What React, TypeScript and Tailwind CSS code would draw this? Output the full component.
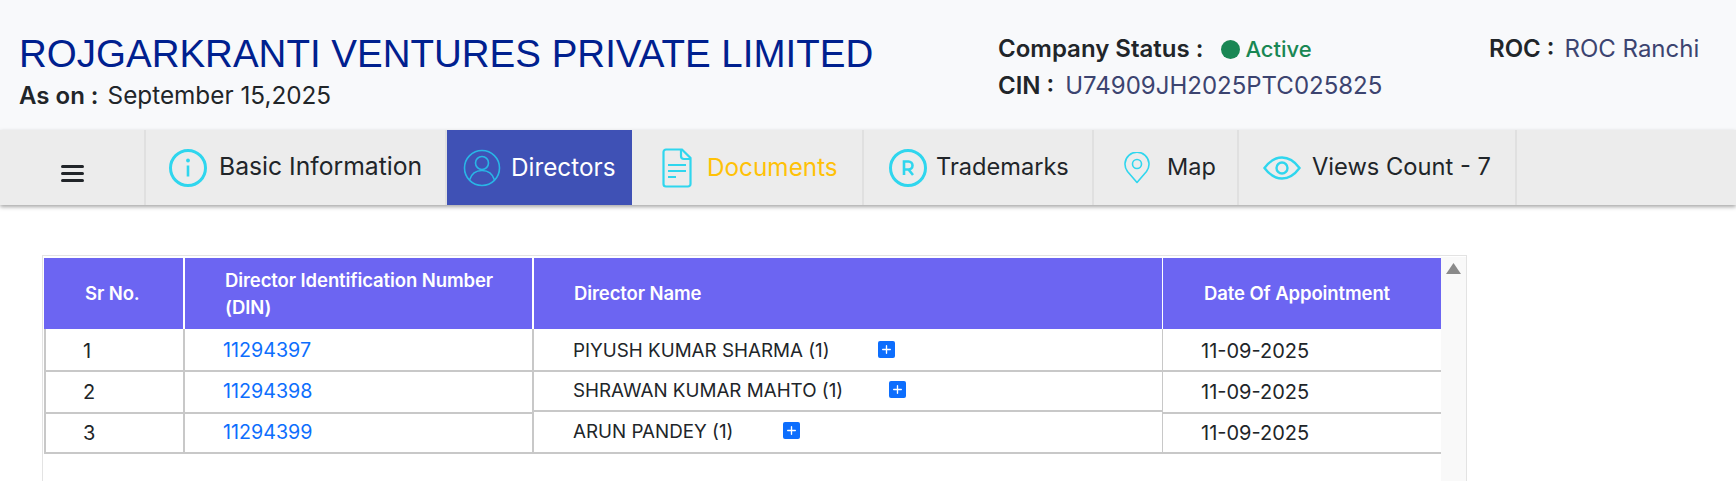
import React from 'react';
import { Plus } from 'lucide-react';

const cyan = '#2fd6ee';

const InfoIcon = () => (
  <svg width="38" height="38" viewBox="0 0 38 38" fill="none" stroke={cyan}>
    <circle cx="19" cy="19" r="17.5" strokeWidth="3" />
    <circle cx="19" cy="11.5" r="1.9" fill={cyan} stroke="none" />
    <path d="M19 16.5V27.5" strokeWidth="2.6" />
  </svg>
);

const UserIcon = () => (
  <svg width="38" height="38" viewBox="0 0 38 38" fill="none" stroke="#29b6e6" strokeWidth="1.6">
    <circle cx="19" cy="19" r="17.5" />
    <circle cx="19" cy="14" r="6.5" />
    <path d="M6.5 31c2-6.5 7-9.5 12.500-9.500s10.500 3 12.500 9.500" />
  </svg>
);

const DocIcon = () => (
  <svg width="30" height="40" viewBox="0 0 30 40" fill="none" stroke={cyan} strokeWidth="2.200">
    <path d="M20 1.500H4a2.500 2.500 0 0 0-2.500 2.500v32A2.500 2.500 0 0 0 4 38.500h22a2.500 2.500 0 0 0 2.500-2.500V10z" />
    <path d="M19 2v6a3 3 0 0 0 3 3h6.500" />
    <path d="M6 17h18M6 23h18M6 29h8" />
  </svg>
);

const TrademarkIcon = () => (
  <svg width="38" height="38" viewBox="0 0 38 38" fill="none" stroke={cyan}>
    <circle cx="19" cy="19" r="17.500" strokeWidth="3" />
    <path d="M15 26V12.500h4.500a4 4 0 0 1 0 8H15M19.500 20.500l4.500 5.500" strokeWidth="2.600" />
  </svg>
);

const PinIcon = () => (
  <svg width="26" height="32" viewBox="0 0 26 32" fill="none" stroke={cyan} strokeWidth="1.600">
    <path d="M13 30.500 3.500 19.500A12 12 0 1 1 22.500 19.500z" strokeLinejoin="round" />
    <circle cx="13" cy="12" r="4.500" />
  </svg>
);

const EyeIcon = () => (
  <svg width="38" height="24" viewBox="0 0 38 24" fill="none" stroke={cyan} strokeWidth="2.400">
    <path d="M1.500 12C7 4.500 12.500 1.500 19 1.500S31 4.500 36.500 12C31 19.500 25.500 22.500 19 22.500S7 19.500 1.500 12z" />
    <circle cx="19" cy="12" r="5.500" />
  </svg>
);

const tabs = [
  { label: 'Basic Information', icon: <InfoIcon />, width: 'w-[301px]', pad: 'pl-[23px]', gap: 'gap-[12px]', text: 'text-[24.700px] text-[#212529]' },
  { label: 'Directors', icon: <UserIcon />, width: 'w-[185px]', pad: 'pl-[16px]', gap: 'gap-[10px]', text: 'text-[24.300px] text-white', active: true },
  { label: 'Documents', icon: <DocIcon />, width: 'w-[232px]', pad: 'pl-[30px]', gap: 'gap-[15px]', text: 'text-[24.300px] text-[#ffc107]' },
  { label: 'Trademarks', icon: <TrademarkIcon />, width: 'w-[230px]', pad: 'pl-[25px]', gap: 'gap-[9px]', text: 'text-[23.600px] text-[#212529]' },
  { label: 'Map', icon: <PinIcon />, width: 'w-[145px]', pad: 'pl-[30px]', gap: 'gap-[17px]', text: 'text-[23.500px] text-[#212529]' },
  { label: 'Views Count - 7', icon: <EyeIcon />, width: 'w-[278px]', pad: 'pl-[24px]', gap: 'gap-[11px]', text: 'text-[23.700px] text-[#212529]' },
];

const Badge = () => (
  <span className="-mt-[4px] flex h-[17px] w-[17px] items-center justify-center rounded-[2px] bg-[#0d6efd] text-white">
    <Plus size={13} strokeWidth={2.5} />
  </span>
);

const rowHeights = ['h-[43px] pt-[2px]', 'h-[42px]', 'h-[40px]'];

const names = [
  { name: 'PIYUSH KUMAR SHARMA (1)', row: 'h-[43px] pt-[3px]', gap: 'gap-[48px]' },
  { name: 'SHRAWAN KUMAR MAHTO (1)', row: 'h-[40px] pt-[1px]', gap: 'gap-[46px]' },
  { name: 'ARUN PANDEY (1)', row: 'h-[42px]', gap: 'gap-[50px]' },
];

const Header = ({ children, pad, line }: { children: React.ReactNode; pad: string; line?: string }) => (
  <div className={`flex h-[71px] items-center border-white bg-[#6c65f2] text-[18.500px] font-semibold leading-[27px] tracking-[-0.1px] text-white ${pad} ${line ?? ''}`}>
    <div>{children}</div>
  </div>
);

export default function App() {
  return (
    <div
      className="h-[481px] overflow-hidden bg-white text-[#212529]"
      style={{ fontFamily: 'Inter, "Noto Sans", sans-serif' }}
    >
      <header className="flex h-[130px] bg-[#f8f9fb]">
        <div className="w-[998px] pl-[19px] pt-[30px]">
          <h1 className="text-[38.500px] leading-[48px] text-[#00208f]" style={{ fontFamily: '"Liberation Sans", Arial, sans-serif' }}>
            ROJGARKRANTI VENTURES PRIVATE LIMITED
          </h1>
          <p className="mt-[1px] text-[24px] leading-[32px]">
            <span className="mr-[3px] font-semibold">As on : </span>
            <span className="text-[24.300px]">September 15,2025</span>
          </p>
        </div>
        <div className="w-[491px] pt-[33px] text-[24px] leading-[32px]">
          <div className="flex items-center">
            <span className="font-semibold">Company Status :</span>
            <span className="ml-[18px] h-[19px] w-[19px] rounded-full bg-[#198754]" />
            <span className="ml-[5px] text-[22px] font-medium text-[#198754]">Active</span>
          </div>
          <div className="mt-[5px]">
            <span className="font-semibold">CIN :</span>
            <span className="ml-[11px] text-[#3c4470]">U74909JH2025PTC025825</span>
          </div>
        </div>
        <div className="pt-[33px] text-[24px] leading-[32px]">
          <span className="font-semibold">ROC :</span>
          <span className="ml-[10px] text-[#3c4470]">ROC Ranchi</span>
        </div>
      </header>

      <nav className="relative flex h-[75px] bg-[#ececec] shadow-[0_2px_4px_rgba(0,0,0,0.35)]">
        <div className="flex w-[146px] items-center justify-center border-r-2 border-[#e0e0e0] pt-[12px]">
          <div className="flex w-[23px] flex-col gap-[4px]">
            <span className="h-[3px] rounded-sm bg-[#212529]" />
            <span className="h-[3px] rounded-sm bg-[#212529]" />
            <span className="h-[3px] rounded-sm bg-[#212529]" />
          </div>
        </div>
        {tabs.map((tab) => (
          <div
            key={tab.label}
            className={`flex items-center ${tab.width} ${tab.pad} ${tab.gap} ${tab.text} ${
              tab.active ? 'bg-[#3f51b5]' : 'border-r-2 border-[#e0e0e0]'
            }`}
          >
            {tab.icon}
            <span className="-mt-[1px] whitespace-nowrap">{tab.label}</span>
          </div>
        ))}
      </nav>

      <main className="ml-[42px] mt-[50px] flex h-[300px] w-[1425px] border border-[#e3e3e3] pl-[1px] pt-[2px]">
        <div className="flex h-fit w-[1397px] text-[20px]">
          <div className="w-[139px]">
            <Header pad="pl-[41px]">Sr No.</Header>
            <div className="border-l-2 border-[#c8c8c8]">
              {['1', '2', '3'].map((n, i) => (
                <div key={n} className={`flex items-center border-b-2 border-[#c8c8c8] pl-[37px] ${rowHeights[i]}`}>
                  {n}
                </div>
              ))}
            </div>
          </div>
          <div className="w-[349px]">
            <Header pad="pl-[40px]" line="border-l-2">
              Director Identification Number
              <br />
              (DIN)
            </Header>
            <div className="border-l-2 border-[#c8c8c8]">
              {['11294397', '11294398', '11294399'].map((din, i) => (
                <div key={din} className={`flex items-center border-b-2 border-[#c8c8c8] pl-[38px] text-[19.700px] text-[#0d6efd] ${rowHeights[i]}`}>
                  {din}
                </div>
              ))}
            </div>
          </div>
          <div className="w-[630px]">
            <Header pad="pl-[40px]" line="border-l-2">Director Name</Header>
            <div className="border-l-2 border-[#c8c8c8]">
              {names.map((row) => (
                <div
                  key={row.name}
                  className={`flex items-center border-b-2 border-[#c8c8c8] pl-[39px] text-[18.800px] ${row.gap} ${row.row}`}
                >
                  <span>{row.name}</span>
                  <Badge />
                </div>
              ))}
            </div>
          </div>
          <div className="w-[279px]">
            <Header pad="pl-[41px]" line="border-l">Date Of Appointment</Header>
            <div className="border-l border-[#c8c8c8]">
              {[0, 1, 2].map((i) => (
                <div key={i} className={`flex items-center border-b-2 border-[#c8c8c8] pl-[38px] ${rowHeights[i]}`}>
                  11-09-2025
                </div>
              ))}
            </div>
          </div>
        </div>
        <div className="-mt-[1px] flex w-[25px] justify-center bg-[#f9f9f9] pt-[6px]">
          <svg width="15" height="11" viewBox="0 0 15 11" fill="#8a8a8a">
            <path d="M7.500 0 15 11H0z" />
          </svg>
        </div>
      </main>
    </div>
  );
}
